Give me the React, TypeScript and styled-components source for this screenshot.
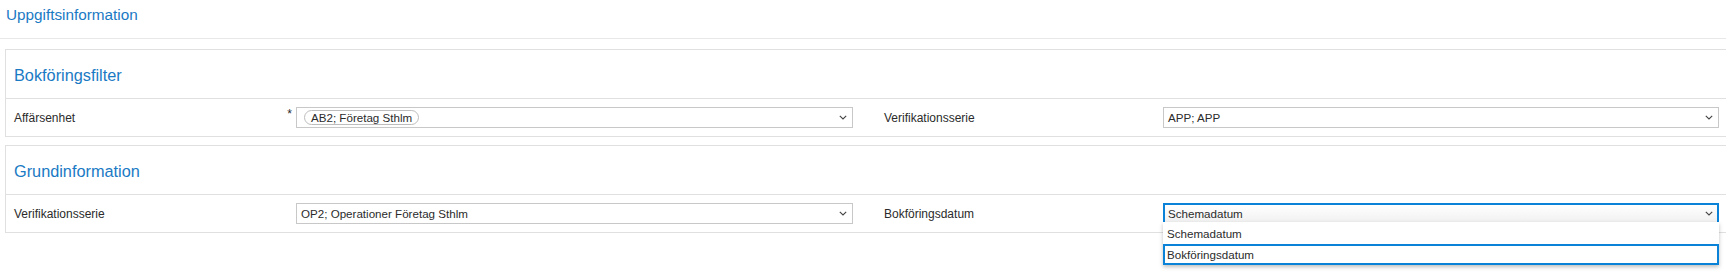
import React from 'react';
import styled, { createGlobalStyle } from 'styled-components';

const blue = '#1a7ac4';
const focusBlue = '#0a82d8';
const textColor = '#2b2b2b';
const lineColor = '#e0e0e0';

const GlobalStyle = createGlobalStyle`
    html, body {
        margin: 0;
        padding: 0;
        background: #ffffff;
        overflow: hidden;
    }

    body {
        font-family: "Liberation Sans", Arial, sans-serif;
        color: ${textColor};
    }
`;

const Page = styled.div`
    width: 1726px;
    height: 280px;
    overflow: hidden;
`;

const PageTitle = styled.h1`
    margin: 0;
    height: 39px;
    box-sizing: border-box;
    padding: 6px 6px 0;

    font-size: 15.3px;
    font-weight: 400;
    color: ${blue};

    border-bottom: 1px solid #e8e8e8;
`;

const Sections = styled.div`
    display: flex;
    flex-direction: column;
    gap: 8px;
    padding: 10px 0 0 5px;
`;

const Section = styled.section`
    width: 1740px;
    border: 1px solid ${lineColor};
`;

const SectionHeader = styled.h2`
    margin: 0;
    height: 49px;
    display: flex;
    align-items: center;
    padding: 3px 8px 0;
    box-sizing: border-box;

    font-size: 16.3px;
    font-weight: 400;
    color: ${blue};

    border-bottom: 1px solid ${lineColor};
`;

const Row = styled.div`
    height: 37px;
    display: flex;
    align-items: center;
    gap: 31px;
    padding-left: 8px;
`;

const Field = styled.div<{ labelWidth: number; inputWidth: number }>`
    display: grid;
    grid-template-columns: ${({ labelWidth }) => labelWidth}px ${({ inputWidth }) => inputWidth}px;
    align-items: center;
`;

const Label = styled.label`
    display: flex;
    justify-content: space-between;
    align-items: flex-start;
    font-size: 12px;
`;

const Required = styled.span`
    margin: -3px 4px 0 0;
    font-size: 12px;
    line-height: 1;
`;

const SelectBox = styled.div<{ focused?: boolean }>`
    position: relative;
    height: 21px;
    box-sizing: border-box;
    display: flex;
    align-items: center;
    padding: 0 ${({ focused }) => (focused ? 3 : 4)}px;

    font-size: 11.6px;
    background: ${({ focused }) => (focused ? 'linear-gradient(#ffffff, #f1f1f1)' : '#ffffff')};
    border: ${({ focused }) => (focused ? `2px solid ${focusBlue}` : '1px solid #c8c8c8')};
`;

const SelectValue = styled.span`
    flex: 1;
    display: flex;
    align-items: center;
    white-space: nowrap;
`;

const Chip = styled.span`
    display: inline-flex;
    align-items: center;
    height: 13px;
    padding: 0 6px;
    margin-left: 3px;

    font-size: 11.6px;
    border: 1px solid #bdbdbd;
    border-radius: 8px;
`;

const Chevron = styled.svg`
    width: 8px;
    height: 5px;
    margin-right: 1px;
    flex-shrink: 0;
`;

const Menu = styled.ul`
    position: absolute;
    top: 100%;
    left: -2px;
    right: -2px;
    margin: 0;
    padding: 0;
    list-style: none;

    background: #ffffff;
    box-shadow: 0 2px 4px rgba(0, 0, 0, 0.25);
`;

const MenuItem = styled.li<{ active?: boolean }>`
    box-sizing: border-box;
    height: ${({ active }) => (active ? 21 : 22)}px;
    display: flex;
    align-items: center;
    padding: 0 ${({ active }) => (active ? 2 : 4)}px;

    font-size: 11.6px;
    color: ${textColor};
    border: ${({ active }) => (active ? `2px solid ${focusBlue}` : 'none')};
`;

const ChevronIcon: React.FC = () => (
    <Chevron viewBox="0 0 8 5">
        <path d="M0.8 0.8 L4 4 L7.2 0.8" fill="none" stroke="#444" strokeWidth="1.1" />
    </Chevron>
);

type SelectProps = {
    value?: string;
    chip?: string;
    focused?: boolean;
    options?: string[];
    activeOption?: string;
};

const Select: React.FC<SelectProps> = ({ value, chip, focused, options, activeOption }) => (
    <SelectBox focused={focused}>
        <SelectValue>{chip ? <Chip>{chip}</Chip> : value}</SelectValue>
        <ChevronIcon />
        {options && (
            <Menu>
                {options.map((option) => (
                    <MenuItem key={option} active={option === activeOption}>
                        {option}
                    </MenuItem>
                ))}
            </Menu>
        )}
    </SelectBox>
);

export default function App() {
    return (
        <Page>
            <GlobalStyle />
            <PageTitle>Uppgiftsinformation</PageTitle>

            <Sections>
                <Section>
                    <SectionHeader>Bokföringsfilter</SectionHeader>
                    <Row>
                        <Field labelWidth={282} inputWidth={557}>
                            <Label>
                                Affärsenhet
                                <Required>*</Required>
                            </Label>
                            <Select chip="AB2; Företag Sthlm" />
                        </Field>
                        <Field labelWidth={279} inputWidth={556}>
                            <Label>Verifikationsserie</Label>
                            <Select value="APP; APP" />
                        </Field>
                    </Row>
                </Section>

                <Section>
                    <SectionHeader>Grundinformation</SectionHeader>
                    <Row>
                        <Field labelWidth={282} inputWidth={557}>
                            <Label>Verifikationsserie</Label>
                            <Select value="OP2; Operationer Företag Sthlm" />
                        </Field>
                        <Field labelWidth={279} inputWidth={556}>
                            <Label>Bokföringsdatum</Label>
                            <Select
                                value="Schemadatum"
                                focused
                                options={['Schemadatum', 'Bokföringsdatum']}
                                activeOption="Bokföringsdatum"
                            />
                        </Field>
                    </Row>
                </Section>
            </Sections>
        </Page>
    );
}
